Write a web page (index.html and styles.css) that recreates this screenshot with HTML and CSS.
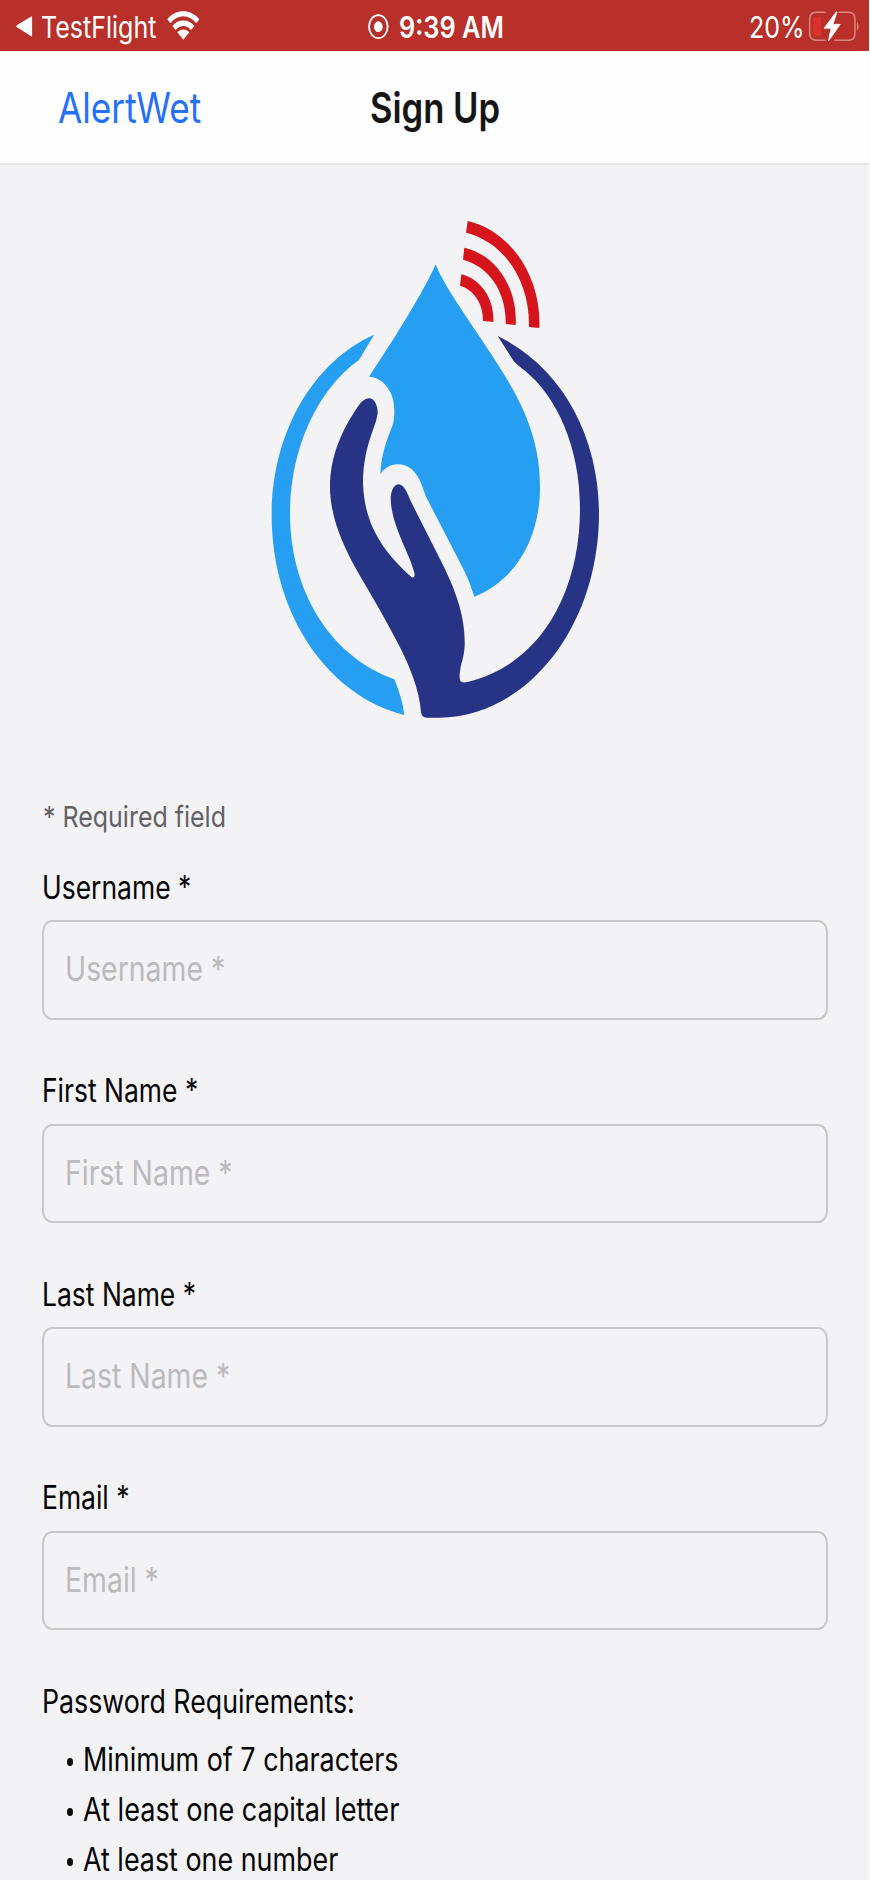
FILE: index.html
```html
<!DOCTYPE html>
<html lang="en">
<head>
<meta charset="utf-8">
<title>Sign Up</title>
<link rel="stylesheet" href="styles.css">
</head>
<body>
<div class="screen">
  <header class="status">
    <div class="status-left">
      <svg class="back-icon" viewBox="0 0 17 21" width="17" height="21"><path d="M15.6.8v19.2L1 10.8c-.6-.4-.6-.8 0-1.2z" fill="#fff" stroke="#fff" stroke-width="1" stroke-linejoin="round"/></svg>
      <span class="text crumb">TestFlight</span>
      <svg class="wifi-icon" viewBox="0 0 98 86" width="32.67" height="28.67"><path d="M1 25C26-7 71-7 97 25L88 37C66 9 32 9 10 37ZM16 45C34 23 64 23 82 45L72 57C59 41 39 41 26 57ZM31 64C42 53 56 53 67 64L49 86Z" fill="#fff"/></svg>
    </div>
    <div class="status-center">
      <svg class="record-icon" viewBox="0 0 62 76" width="20.67" height="25.33"><ellipse cx="31" cy="38" rx="28" ry="34.5" fill="none" stroke="#fff" stroke-width="5.5"/><ellipse cx="31" cy="38" rx="13" ry="16" fill="#fff"/></svg>
      <span class="text clock">9:39 AM</span>
    </div>
    <div class="status-right">
      <span class="text percent">20%</span>
      <svg class="battery-icon" viewBox="0 0 154 92" width="51.33" height="30.67"><path d="M50 4H22Q2 4 2 25V67Q2 88 22 88H50M76 88H118Q138 88 138 67V25Q138 4 118 4H89" fill="none" stroke="#d98682" stroke-width="4.5"/><path d="M144 32Q154 46 144 60Z" fill="#d98682"/><path d="M20 17H36V75H20Q11 75 11 65V27Q11 17 20 17Z" fill="#da312c"/><path d="M82 2 45 52H66L58 91 94 40H72L84 4Z" fill="#fff" stroke="#fff" stroke-width="2" stroke-linejoin="round"/></svg>
    </div>
  </header>
  <nav class="nav">
    <a class="text nav-back">AlertWet</a>
    <h1 class="text nav-title">Sign Up</h1>
  </nav>
  <main class="content">
    <svg class="logo" viewBox="0 0 1110 1590" width="370" height="530">
      <g fill="#269ff2">
        <path d="M557 193C583 265 700 420 760 520C835 640 870 740 870 862C870 1010 800 1140 673 1190C663 1160 655 1137 640 1107L530 894C522 878 520 866 513 850C498 812 475 793 443 793C420 793 404 804 391 823C394 760 412 715 425 683Q434 662 433 630C433 575 400 532 357 530L440 402C480 338 535 245 557 193Z"/>
        <path d="M372 404C180 490 65 710 65 945C65 1250 240 1490 463 1545Q457 1495 433 1438C230 1365 120 1160 120 940C120 750 200 570 327 480Z"/>
      </g>
      <path fill="#273384" d="M743 408C935 500 1047 710 1047 940C1047 1290 820 1560 557 1553H530Q514 1552 513 1535C508 1470 480 1400 445 1332C400 1245 360 1180 320 1110C275 1030 240 945 240 862C240 770 275 690 325 618Q341 594 359 595C375 597 384 620 383 640Q380 662 371 684C350 740 339 790 339 850C343 975 400 1055 485 1132Q494 1135 494 1122C482 1065 422 975 422 893C424 868 433 854 446 853C467 857 473 885 487 913L582 1101C625 1190 646 1260 644 1337Q643 1362 633 1396C628 1420 628 1435 631 1443Q637 1450 652 1446C870 1395 990 1180 990 925C990 740 920 590 825 512Q798 492 791 483Z"/>
      <path fill="#d5141c" d="M653 63C790 95 875 240 868 384L837 381C840 240 760 125 648 98ZM643 143C740 165 803 265 797 375L767 372C770 280 720 200 639 179ZM634 223C695 238 734 300 730 366L699 363C700 315 675 270 630 257Z"/>
    </svg>
    <p class="text required">* Required field</p>
    <form class="form">
      <div class="field"><label class="text label">Username *</label><div class="box"><span class="text hint">Username *</span></div></div>
      <div class="field"><label class="text label">First Name *</label><div class="box"><span class="text hint">First Name *</span></div></div>
      <div class="field"><label class="text label">Last Name *</label><div class="box"><span class="text hint">Last Name *</span></div></div>
      <div class="field"><label class="text label">Email *</label><div class="box"><span class="text hint">Email *</span></div></div>
      <section class="rules">
        <h2 class="text rules-title">Password Requirements:</h2>
        <ul class="rules-list">
          <li class="rule"><span class="text rule-text">Minimum of 7 characters</span></li>
          <li class="rule"><span class="text rule-text rule-text-wide">At least one capital letter</span></li>
          <li class="rule"><span class="text rule-text">At least one number</span></li>
        </ul>
      </section>
    </form>
  </main>
</div>
</body>
</html>
```
FILE: styles.css
```css
* { box-sizing: border-box; }

body {
  margin: 0;
  background: #f3f2f5;
  font-family: Inter, "Liberation Sans", sans-serif;
  color: #060606;
}

h1, h2, p, ul { margin: 0; padding: 0; font-weight: 400; }

.screen {
  width: 870px;
  height: 1880px;
  overflow: hidden;
  border-right: 1px solid #fbfafb;
}

/* The interface face is narrower than Inter, so each text is condensed. */
.text {
  display: block;
  white-space: nowrap;
  transform: scaleX(var(--condense, 0.83));
  transform-origin: 0 50%;
}

.status {
  display: grid;
  grid-template-columns: 368px 380px 1fr;
  height: 51px;
  background: #b83029;
  color: #fff;
  font-size: 30px;
  line-height: 55px;
}

.status-left, .status-center, .status-right { display: flex; align-items: flex-start; }

.back-icon { margin: 16px 0 0 15.5px; flex: none; }
.crumb { --condense: 0.834; width: 125.5px; margin-left: 8.7px; }
.wifi-icon { margin-top: 11px; flex: none; }
.record-icon { margin-top: 14.2px; flex: none; }
.clock { --condense: 0.846; margin-left: 10px; font-weight: 600; }
.status-right { padding-left: 1px; }
.percent { --condense: 0.833; width: 60px; }
.battery-icon { margin-top: 10.7px; flex: none; }

.nav {
  display: grid;
  grid-template-columns: 312.7px 1fr;
  height: 114px;
  padding-left: 57.5px;
  background: #fefefe;
  border-bottom: 2px solid #e5e4e6;
  font-size: 42px;
  line-height: 114px;
}

.nav-back { --condense: 0.838; color: #2570fb; }
.nav-title { --condense: 0.824; font-size: 42px; font-weight: 600; color: #151517; }

.content { padding: 35px 41px 0 42px; }

.logo { display: block; margin: 0 0 66.5px 208px; }

.required {
  --condense: 0.861;
  margin-left: 1px;
  font-size: 29px;
  line-height: 40px;
  color: #636166;
}

.form { display: flex; flex-direction: column; gap: 51.5px; margin-top: 31px; }

.field { display: flex; flex-direction: column; gap: 12.5px; }

.label { --condense: 0.827; font-size: 32px; line-height: 40px; }

.box {
  height: 99.5px;
  padding-left: 21px;
  border: 2px solid #c8c7c9;
  border-radius: 10px / 12px;
}

.hint { --condense: 0.823; font-size: 34.5px; line-height: 94px; color: #bbbabd; }

.rules-title { --condense: 0.836; font-size: 32px; line-height: 40px; }

.rules-list { list-style: none; margin-top: 13px; }

.rule {
  display: grid;
  grid-template-columns: 6px 1fr;
  column-gap: 10.5px;
  align-items: center;
  padding-left: 24.5px;
}

.rule::before {
  content: "";
  height: 8px;
  border-radius: 50%;
  background: #060606;
  margin-top: 4px;
}

.rule-text { --condense: 0.84; font-size: 32px; line-height: 50.3px; }
.rule-text-wide { --condense: 0.846; }
```
